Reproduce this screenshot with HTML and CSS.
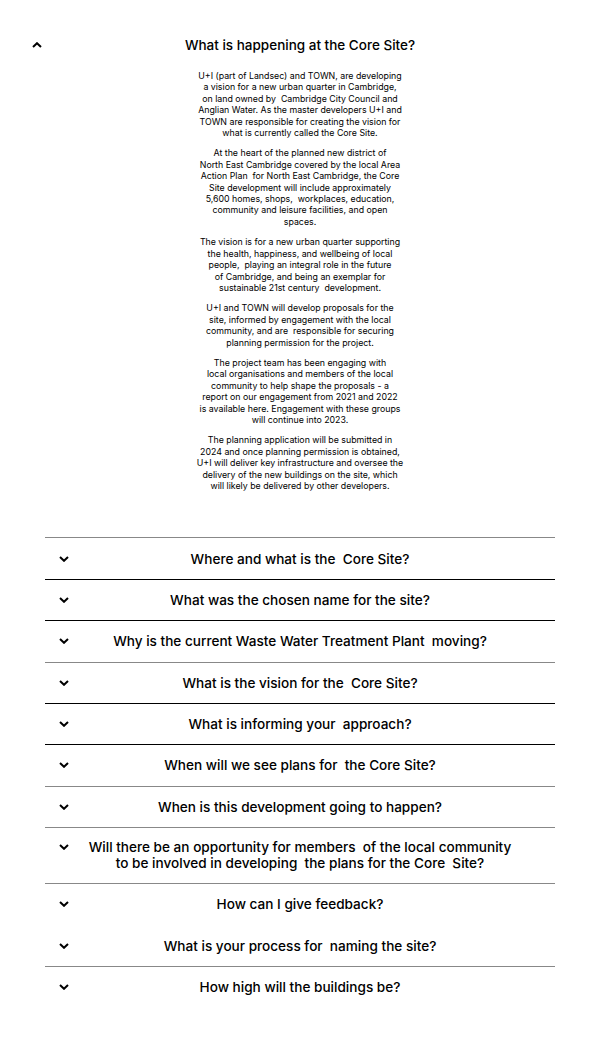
FILE: index.html
```html
<!DOCTYPE html>
<html lang="en">
<head>
<meta charset="utf-8">
<title>FAQ – Core Site</title>
<link rel="stylesheet" href="styles.css">
</head>
<body>
<main class="faq">
  <section class="item item-open">
    <div class="head">
      <svg class="chev" viewBox="0 0 10 6" width="10" height="6"><path d="M1 5 L5 1.2 L9 5" fill="none" stroke="#000" stroke-width="2"/></svg>
      <h2 class="q q-title">What is happening at the Core Site?</h2>
      <span></span>
    </div>
    <div class="answer">
      <p>U+I (part of Landsec) and TOWN, are developing<br>a vision for a new urban quarter in Cambridge,<br>on land owned by&nbsp; Cambridge City Council and<br>Anglian Water. As the master developers U+I and<br>TOWN are responsible for creating the vision for<br>what is currently called the Core Site.</p>
      <p>At the heart of the planned new district of<br>North East Cambridge covered by the local Area<br>Action Plan&nbsp; for North East Cambridge, the Core<br>Site development will include approximately<br>5,600 homes, shops,&nbsp; workplaces, education,<br>community and leisure facilities, and open<br>spaces.</p>
      <p>The vision is for a new urban quarter supporting<br>the health, happiness, and wellbeing of local<br>people,&nbsp; playing an integral role in the future<br>of Cambridge, and being an exemplar for<br>sustainable 21st century&nbsp; development.</p>
      <p>U+I and TOWN will develop proposals for the<br>site, informed by engagement with the local<br>community, and are&nbsp; responsible for securing<br>planning permission for the project.</p>
      <p>The project team has been engaging with<br>local organisations and members of the local<br>community to help shape the proposals - a<br>report on our engagement from 2021 and 2022<br>is available here. Engagement with these groups<br>will continue into 2023.</p>
      <p>The planning application will be submitted in<br>2024 and once planning permission is obtained,<br>U+I will deliver key infrastructure and oversee the<br>delivery of the new buildings on the site, which<br>will likely be delivered by other developers.</p>
    </div>
  </section>

  <ul class="list">
    <li class="row line-soft"><svg class="chev" viewBox="0 0 10 6" width="10" height="6"><path d="M1 1 L5 4.8 L9 1" fill="none" stroke="#000" stroke-width="2"/></svg><span class="q">Where and what is the&nbsp; Core Site?</span><span></span></li>
    <li class="row"><svg class="chev" viewBox="0 0 10 6" width="10" height="6"><path d="M1 1 L5 4.8 L9 1" fill="none" stroke="#000" stroke-width="2"/></svg><span class="q">What was the chosen name for the site?</span><span></span></li>
    <li class="row"><svg class="chev" viewBox="0 0 10 6" width="10" height="6"><path d="M1 1 L5 4.8 L9 1" fill="none" stroke="#000" stroke-width="2"/></svg><span class="q">Why is the current Waste Water Treatment Plant&nbsp; moving?</span><span></span></li>
    <li class="row line-soft"><svg class="chev" viewBox="0 0 10 6" width="10" height="6"><path d="M1 1 L5 4.8 L9 1" fill="none" stroke="#000" stroke-width="2"/></svg><span class="q">What is the vision for the&nbsp; Core Site?</span><span></span></li>
    <li class="row"><svg class="chev" viewBox="0 0 10 6" width="10" height="6"><path d="M1 1 L5 4.8 L9 1" fill="none" stroke="#000" stroke-width="2"/></svg><span class="q">What is informing your&nbsp; approach?</span><span></span></li>
    <li class="row"><svg class="chev" viewBox="0 0 10 6" width="10" height="6"><path d="M1 1 L5 4.8 L9 1" fill="none" stroke="#000" stroke-width="2"/></svg><span class="q">When will we see plans for&nbsp; the Core Site?</span><span></span></li>
    <li class="row line-soft"><svg class="chev" viewBox="0 0 10 6" width="10" height="6"><path d="M1 1 L5 4.8 L9 1" fill="none" stroke="#000" stroke-width="2"/></svg><span class="q">When is this development going to happen?</span><span></span></li>
    <li class="row line-soft row-top"><svg class="chev" viewBox="0 0 10 6" width="10" height="6"><path d="M1 1 L5 4.8 L9 1" fill="none" stroke="#000" stroke-width="2"/></svg><span class="q">Will there be an opportunity for members&nbsp; of the local community<br>to be involved in developing&nbsp; the plans for the Core&nbsp; Site?</span><span></span></li>
    <li class="row line-soft"><svg class="chev" viewBox="0 0 10 6" width="10" height="6"><path d="M1 1 L5 4.8 L9 1" fill="none" stroke="#000" stroke-width="2"/></svg><span class="q">How can I give feedback?</span><span></span></li>
    <li class="row line-none"><svg class="chev" viewBox="0 0 10 6" width="10" height="6"><path d="M1 1 L5 4.8 L9 1" fill="none" stroke="#000" stroke-width="2"/></svg><span class="q">What is your process for&nbsp; naming the site?</span><span></span></li>
    <li class="row line-soft"><svg class="chev" viewBox="0 0 10 6" width="10" height="6"><path d="M1 1 L5 4.8 L9 1" fill="none" stroke="#000" stroke-width="2"/></svg><span class="q">How high will the buildings be?</span><span></span></li>
  </ul>
</main>
</body>
</html>
```

FILE: styles.css
```css
* { box-sizing: border-box; }

html, body {
  margin: 0;
  padding: 0;
  background: #fff;
  color: #000;
  font-family: Inter, "Liberation Sans", sans-serif;
}

.faq {
  display: flex;
  flex-direction: column;
  padding-top: 24px;
}

.item-open {
  margin: 0 18px;
}

.head,
.row {
  display: grid;
  grid-template-columns: 38px 1fr 38px;
  align-items: center;
}

.head {
  padding: 11px 0;
}

.chev {
  display: block;
  justify-self: center;
}

.q {
  margin: 0;
  text-align: center;
  font-size: 13.6px;
  font-weight: 500;
  line-height: 16px;
}

.q-title {
  line-height: 20px;
  font-size: 13.5px;
}

.answer {
  padding: 4px 0 46px;
  text-align: center;
  font-size: 8.8px;
  line-height: 11.4px;
}

.answer p {
  margin: 0 0 9px;
}

.answer p:last-child {
  margin-bottom: 0;
}

.list {
  list-style: none;
  margin: 0 45px;
  padding: 0;
}

.row {
  border-top: 1px solid #000;
  padding: 12.2px 0;
}

.row-top {
  align-items: start;
  padding: 11.2px 0 11.8px;
}

.row-top .chev {
  margin-top: 5px;
}

.line-soft {
  border-top-color: #888;
}

.line-none {
  border-top-color: transparent;
}
```
